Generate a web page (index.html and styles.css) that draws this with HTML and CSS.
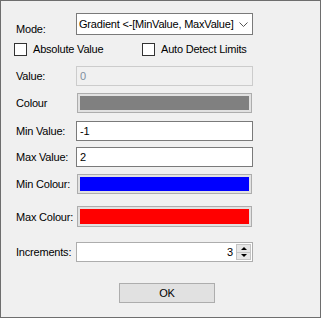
FILE: index.html
```html
<!DOCTYPE html>
<html lang="en">

<head>
    <meta charset="UTF-8">
    <title>Colour Settings</title>
    <link rel="stylesheet" href="styles.css">
</head>

<body>
    <div class="window">
        <div class="row mode-row">
            <div class="label">Mode:</div>
            <div class="select">
                <span>Gradient &lt;-[MinValue, MaxValue]</span>
                <svg class="chevron" width="9" height="5" viewBox="0 0 9 5">
                    <path d="M0.5 0.5 L4.5 4.5 L8.5 0.5" fill="none" stroke="#555" stroke-width="1"/>
                </svg>
            </div>
        </div>
        <div class="checks">
            <label class="check first"><span class="box"></span>Absolute Value</label>
            <label class="check"><span class="box"></span>Auto Detect Limits</label>
        </div>
        <div class="row value-row">
            <div class="label">Value:</div>
            <div class="input disabled">0</div>
        </div>
        <div class="row colour-row">
            <div class="label">Colour</div>
            <div class="swatch"><div class="fill" style="background: #808080;"></div></div>
        </div>
        <div class="row min-row">
            <div class="label">Min Value:</div>
            <div class="input">-1</div>
        </div>
        <div class="row max-row">
            <div class="label">Max Value:</div>
            <div class="input">2</div>
        </div>
        <div class="row mincol-row">
            <div class="label">Min Colour:</div>
            <div class="swatch"><div class="fill" style="background: #0000ff;"></div></div>
        </div>
        <div class="row maxcol-row">
            <div class="label">Max Colour:</div>
            <div class="swatch"><div class="fill" style="background: #ff0000;"></div></div>
        </div>
        <div class="row inc-row">
            <div class="label">Increments:</div>
            <div class="numeric">
                <span class="num">3</span>
                <div class="spin">
                    <div class="spin-btn"><span class="up"></span></div>
                    <div class="spin-btn"><span class="down"></span></div>
                </div>
            </div>
        </div>
        <div class="buttons">
            <div class="ok">OK</div>
        </div>
    </div>
</body>

</html>
```

FILE: styles.css
```css
body {
    margin: 0;
    padding: 0;
}

.window {
    width: 321px;
    height: 318px;
    box-sizing: border-box;
    border: 1px solid #6e6e6e;
    background-color: #f0f0f0;
    padding: 12px 0 0 15px;
    font-family: "Liberation Sans", Arial, sans-serif;
    font-size: 11px;
    letter-spacing: -0.2px;
    color: #000;
    white-space: nowrap;
}

.row {
    display: flex;
    align-items: center;
    height: 20px;
}

.label {
    width: 60px;
    flex: none;
}

.mode-row {
    height: 22px;
}

.mode-row .label {
    padding-top: 9px;
}

.select {
    width: 177px;
    height: 22px;
    box-sizing: border-box;
    border: 1px solid #7a7a7a;
    background-color: #fff;
    display: flex;
    align-items: center;
    justify-content: space-between;
    padding: 0 4px 0 2px;
    overflow: hidden;
}

.chevron {
    margin-top: 1px;
    flex: none;
}

.checks {
    display: flex;
    height: 13px;
    margin-top: 8px;
    margin-left: -2px;
}

.check {
    display: flex;
    align-items: center;
    gap: 6px;
    line-height: 13px;
}

.check.first {
    width: 128px;
}

.box {
    width: 13px;
    height: 13px;
    box-sizing: border-box;
    border: 1px solid #333;
    background-color: #fff;
}

.input {
    width: 177px;
    height: 20px;
    box-sizing: border-box;
    border: 1px solid #7a7a7a;
    background-color: #fff;
    padding-left: 3px;
    line-height: 18px;
}

.input.disabled {
    border-color: #cccccc;
    background-color: #f0f0f0;
    color: #7f8ea0;
}

.swatch {
    width: 175px;
    height: 20px;
    margin-left: 1px;
    box-sizing: border-box;
    border: 1px solid #adadad;
    background-color: #e1e1e1;
    padding: 2px;
}

.fill {
    width: 100%;
    height: 100%;
}

.value-row {
    margin-top: 10px;
}

.colour-row {
    margin-top: 7px;
}

.min-row {
    margin-top: 8px;
}

.max-row {
    margin-top: 6px;
}

.mincol-row {
    margin-top: 7px;
}

.maxcol-row {
    margin-top: 12px;
    height: 21px;
}

.maxcol-row .swatch {
    height: 21px;
}

.inc-row {
    margin-top: 15px;
}

.numeric {
    width: 177px;
    height: 20px;
    box-sizing: border-box;
    border: 1px solid #adadad;
    background-color: #fff;
    display: flex;
    justify-content: flex-end;
    align-items: center;
    padding-right: 1px;
}

.num {
    margin-right: 3px;
}

.spin {
    width: 15px;
    height: 16px;
    display: flex;
    flex-direction: column;
}

.spin-btn {
    flex: 1;
    background-color: #e6e6e6;
    border: 1px solid #c4c4c4;
    display: flex;
    align-items: center;
    justify-content: center;
}

.spin-btn + .spin-btn {
    border-top: none;
}

.up {
    width: 0;
    height: 0;
    border-left: 3px solid transparent;
    border-right: 3px solid transparent;
    border-bottom: 3px solid #000;
}

.down {
    width: 0;
    height: 0;
    border-left: 3px solid transparent;
    border-right: 3px solid transparent;
    border-top: 3px solid #000;
}

.buttons {
    display: flex;
    margin-top: 21px;
    padding-left: 103px;
}

.ok {
    width: 96px;
    height: 20px;
    box-sizing: border-box;
    border: 1px solid #adadad;
    background-color: #e1e1e1;
    text-align: center;
    line-height: 18px;
}
```
